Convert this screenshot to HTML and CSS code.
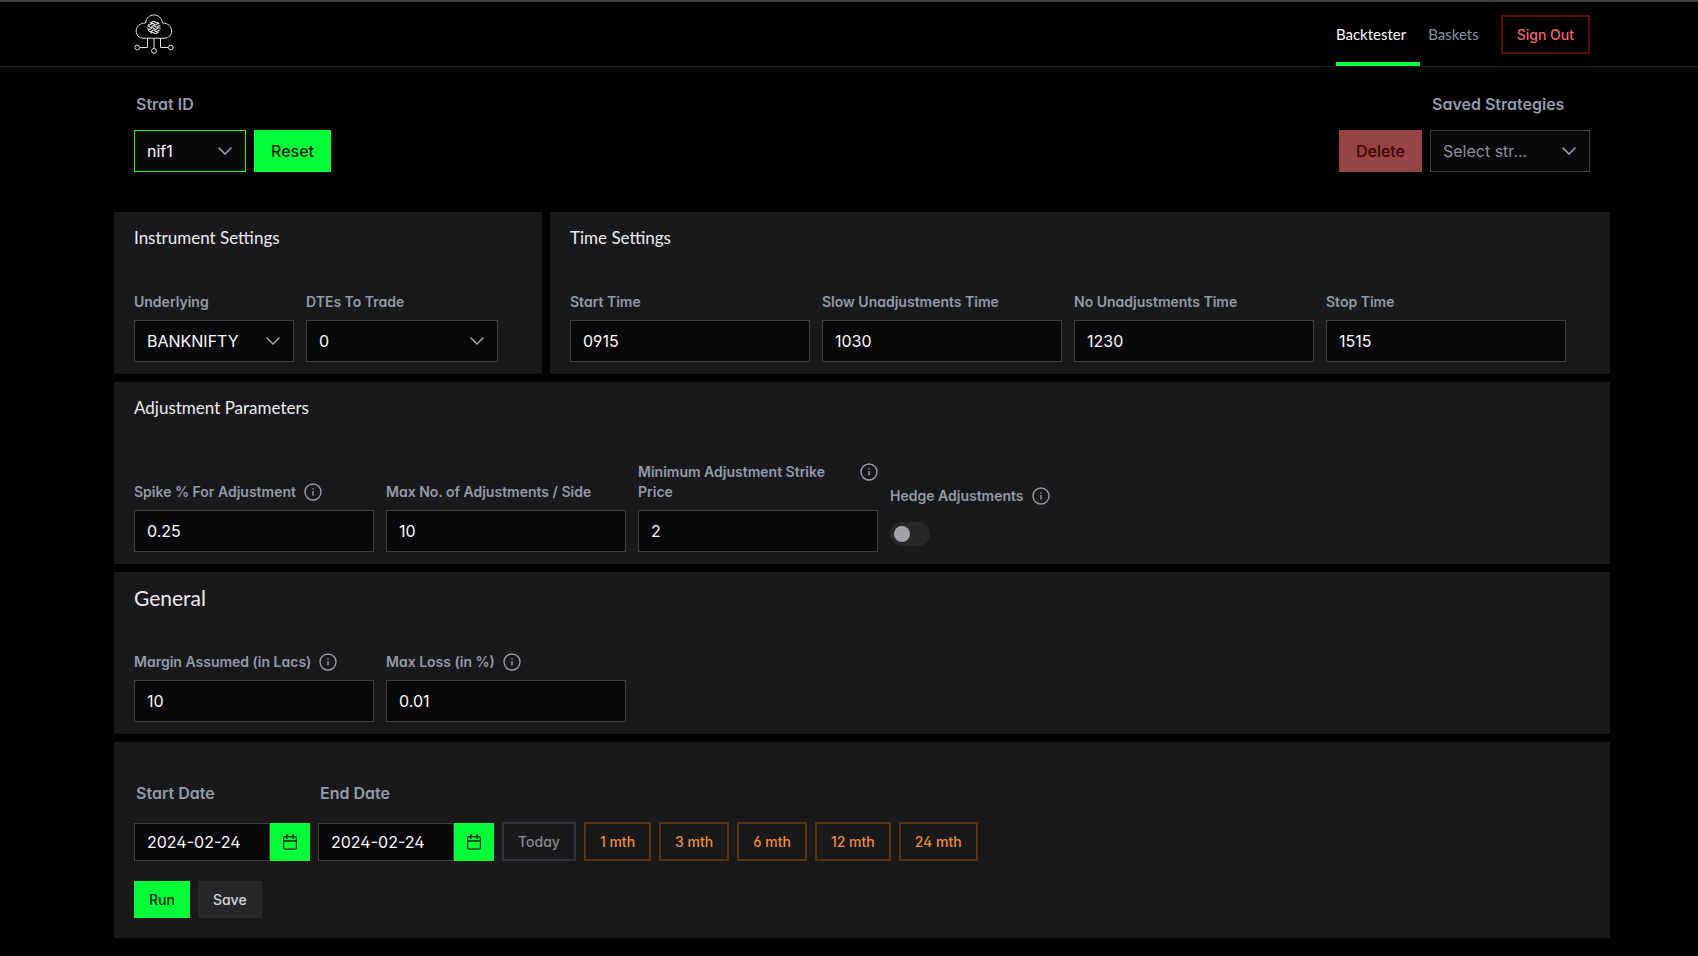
FILE: index.html
```html
<!DOCTYPE html>
<html lang="en">
<head>
<meta charset="utf-8">
<meta name="viewport" content="width=device-width, initial-scale=1">
<title>Backtester</title>
<link rel="stylesheet" href="styles.css">
</head>
<body>
<svg class="defs" aria-hidden="true">
  <symbol id="chevron" viewBox="0 0 14 14"><path d="M1 4l6 6 6-6" fill="none" stroke="currentColor" stroke-width="1.6" stroke-linecap="round" stroke-linejoin="round"/></symbol>
  <symbol id="info" viewBox="0 0 18 18"><circle cx="9" cy="9" r="8" fill="none" stroke="currentColor" stroke-width="1.4"/><path d="M9 8v4.6M9 5.2v1.4" fill="none" stroke="currentColor" stroke-width="1.4"/></symbol>
  <symbol id="calendar" viewBox="0 0 16 16"><rect x="1.6" y="2.6" width="12.8" height="12.6" rx="1.8" fill="none" stroke="currentColor" stroke-width="1.2"/><path d="M1.6 7h12.8M5 .4v4M11 .4v4" fill="none" stroke="currentColor" stroke-width="1.3" stroke-linecap="round"/></symbol>
</svg>

<header class="topbar">
  <a class="logo" href="#" aria-label="Home">
    <svg viewBox="0 0 40 40" fill="none" stroke="#e4e4e7" stroke-width="1">
      <clipPath id="globe"><circle cx="20" cy="13.600" r="6.800"/></clipPath>
      <path d="M9 24.200C5 24 2.200 21.200 2.200 17.200C2.200 12.500 6 9 11.600 9C12.200 3.900 15.600 1 20 1C24.400 1 27.800 3.900 28.400 9C34 9 37.600 12.500 37.600 17C37.600 21.200 34.600 24 30.800 24.200Z"/>
      <path d="M13.500 24.200v9.300H6M26.500 24.200v9.300H34M20 24.200v10"/>
      <circle cx="3.200" cy="33.500" r="2.400"/><circle cx="36.800" cy="33.500" r="2.400"/><circle cx="20" cy="36.900" r="2.400"/>
      <path clip-path="url(#globe)" stroke-width="1.100" d="M12 8q1.500-1.600 3 0t3 0 3 0 3 0 4 0M11 10.200q1.500-1.600 3 0t3 0 3 0 3 0 4 0M12 12.400q1.500-1.600 3 0t3 0 3 0 3 0 4 0M11 14.600q1.500-1.600 3 0t3 0 3 0 3 0 4 0M12 16.800q1.500-1.600 3 0t3 0 3 0 3 0 4 0M11 19q1.500-1.600 3 0t3 0 3 0 3 0 4 0"/>
    </svg>
  </a>
  <nav class="nav">
    <a class="nav-link active" href="#">Backtester</a>
    <a class="nav-link" href="#">Baskets</a>
    <button class="btn btn-outline btn-danger" type="button">Sign Out</button>
  </nav>
</header>

<main class="page">
  <section class="strategy-bar">
    <div class="stack">
      <label class="big-label" for="strat">Strat ID</label>
      <div class="row">
        <span class="select select-strat"><select id="strat"><option>nif1</option></select><svg><use href="#chevron"/></svg></span>
        <button class="btn btn-large btn-green" type="button">Reset</button>
      </div>
    </div>
    <div class="saved">
      <label class="big-label" for="saved">Saved Strategies</label>
      <button class="btn btn-large btn-delete" type="button">Delete</button>
      <span class="select select-md muted"><select id="saved"><option>Select str...</option></select><svg><use href="#chevron"/></svg></span>
    </div>
  </section>

  <div class="panels">
    <section class="panel">
      <h2>Instrument Settings</h2>
      <div class="fields">
        <div class="field"><label for="underlying">Underlying</label>
          <span class="select select-md"><select id="underlying"><option>BANKNIFTY</option></select><svg><use href="#chevron"/></svg></span></div>
        <div class="field"><label for="dte">DTEs To Trade</label>
          <span class="select select-lg"><select id="dte"><option>0</option></select><svg><use href="#chevron"/></svg></span></div>
      </div>
    </section>

    <section class="panel">
      <h2>Time Settings</h2>
      <div class="fields">
        <div class="field"><label for="start">Start Time</label><input class="text" id="start" value="0915"></div>
        <div class="field"><label for="slow">Slow Unadjustments Time</label><input class="text" id="slow" value="1030"></div>
        <div class="field"><label for="none">No Unadjustments Time</label><input class="text" id="none" value="1230"></div>
        <div class="field"><label for="stop">Stop Time</label><input class="text" id="stop" value="1515"></div>
      </div>
    </section>

    <section class="panel wide">
      <h2>Adjustment Parameters</h2>
      <div class="fields">
        <div class="field"><div class="label-row"><label for="spike">Spike % For Adjustment</label><svg class="info"><use href="#info"/></svg></div><input class="text" id="spike" value="0.25"></div>
        <div class="field"><label for="maxadj">Max No. of Adjustments / Side</label><input class="text" id="maxadj" value="10"></div>
        <div class="field"><div class="label-row"><label for="strike">Minimum Adjustment Strike Price</label><svg class="info"><use href="#info"/></svg></div><input class="text" id="strike" value="2"></div>
        <div class="field field-toggle"><div class="label-row"><label for="hedge">Hedge Adjustments</label><svg class="info"><use href="#info"/></svg></div><input class="toggle" id="hedge" type="checkbox" role="switch"></div>
      </div>
    </section>

    <section class="panel wide">
      <h2 class="large">General</h2>
      <div class="fields">
        <div class="field"><div class="label-row"><label for="margin">Margin Assumed (in Lacs)</label><svg class="info"><use href="#info"/></svg></div><input class="text" id="margin" value="10"></div>
        <div class="field"><div class="label-row"><label for="loss">Max Loss (in %)</label><svg class="info"><use href="#info"/></svg></div><input class="text" id="loss" value="0.01"></div>
      </div>
    </section>

    <section class="panel wide run-panel">
      <div class="row dates">
        <div class="stack">
          <label class="big-label" for="from">Start Date</label>
          <div class="date"><input class="text" id="from" value="2024-02-24"><button type="button" aria-label="Choose start date"><svg><use href="#calendar"/></svg></button></div>
        </div>
        <div class="stack">
          <label class="big-label" for="to">End Date</label>
          <div class="date"><input class="text" id="to" value="2024-02-24"><button type="button" aria-label="Choose end date"><svg><use href="#calendar"/></svg></button></div>
        </div>
        <button class="btn btn-outline btn-today" type="button">Today</button>
        <button class="btn btn-outline btn-month" type="button">1 mth</button>
        <button class="btn btn-outline btn-month" type="button">3 mth</button>
        <button class="btn btn-outline btn-month" type="button">6 mth</button>
        <button class="btn btn-outline btn-month" type="button">12 mth</button>
        <button class="btn btn-outline btn-month" type="button">24 mth</button>
      </div>
      <div class="row">
        <button class="btn btn-green" type="button">Run</button>
        <button class="btn btn-grey" type="button">Save</button>
      </div>
    </section>
  </div>
</main>
</body>
</html>
```
FILE: styles.css
```css
* { box-sizing: border-box; }

body {
  margin: 0;
  min-height: 100vh;
  border-top: 2px solid #424242;
  background: #000;
  color: #fafafa;
  font-family: Inter, "Liberation Sans", sans-serif;
  font-feature-settings: "cv02", "cv03", "cv04", "cv11";
}

button, input, select {
  margin: 0;
  border-radius: 0;
  font: inherit;
  font-feature-settings: inherit;
  color: inherit;
}

.defs { display: none; }

/* Top bar */
.topbar {
  display: flex;
  justify-content: space-between;
  align-items: center;
  height: 65px;
  padding: 0 108px 0 134px;
  border-bottom: 1px solid #1d1d1f;
}
.logo svg { display: block; width: 40px; height: 40px; }
.nav { display: flex; align-items: center; align-self: stretch; }
.nav-link {
  display: flex;
  align-items: center;
  align-self: stretch;
  margin-right: 8px;
  border: solid transparent;
  border-width: 4px 0;
  padding-right: 14px;
  color: #8b93a3;
  font-family: "Futura PT", Futura, Lato, sans-serif;
  font-size: 15px;
  text-decoration: none;
}
.nav-link.active { color: #fafafa; border-bottom-color: #00ff38; }

/* Buttons */
.btn {
  border: 0;
  padding: 10px 15px;
  font-size: 14px;
  line-height: 17px;
  font-weight: 500;
}
.btn-large { padding: 0 17px; height: 42px; font-size: 16px; }
.btn-green { background: #00ff38; color: #052310; }
.btn-grey { background: #27272a; color: #d4d4d8; }
.btn-delete { background: #954344; color: #3a0708; }
.btn-outline { border: 2px solid; padding: 9px 14px; background: transparent; }
.btn-danger { border-color: #5a0d10; color: #f26669; }
.btn-today { border-color: #323238; color: #8a8a92; }
.btn-month { border-color: #573510; color: #ee8d3e; }

/* Form controls */
.text, .select select {
  width: 100%;
  height: 42px;
  border: 1px solid #3f3f43;
  padding: 0 12px;
  background: #09090b;
  font-size: 16px;
}
.select { position: relative; display: block; }
.select select { appearance: none; }
.select svg {
  position: absolute;
  top: 14px;
  right: 14px;
  width: 14px;
  height: 14px;
  color: #a1a1aa;
  pointer-events: none;
}
.select-strat { width: 112px; }
.select-strat select { border-color: #00ff38; }
.select-md { width: 160px; }
.select-lg { width: 192px; }
.muted { color: #8f8f97; }

.toggle {
  position: relative;
  appearance: none;
  width: 40px;
  height: 24px;
  border-radius: 12px;
  background: #27272a;
}
.toggle::before {
  content: "";
  position: absolute;
  top: 4px;
  left: 4px;
  width: 16px;
  height: 16px;
  border-radius: 50%;
  background: #a1a1aa;
}

/* Page */
.page { padding: 25px 88px 16px 114px; }
.row { display: flex; gap: 8px; }
.stack { display: grid; gap: 14px; }
.big-label {
  padding-left: 2px;
  color: #949ba8;
  font-size: 16px;
  line-height: 24px;
  font-weight: 600;
}
.strategy-bar {
  display: flex;
  justify-content: space-between;
  padding: 0 20px;
  margin-bottom: 40px;
}
.saved { display: grid; grid-template-columns: auto auto; gap: 14px 8px; }
.saved .big-label { grid-column: 2; }

.panels { display: grid; grid-template-columns: 428px minmax(0, 1fr); gap: 8px; }
.panel { padding: 12px 20px; background: #19191b; }
.wide { grid-column: 1 / -1; }
.panel h2 {
  margin: 0 0 40px;
  color: #ececee;
  font-family: "Futura PT", Futura, Lato, sans-serif;
  font-size: 17px;
  line-height: 28px;
  font-weight: 400;
}
.panel h2.large { font-size: 21px; }
.fields { display: flex; flex-wrap: wrap; align-items: flex-end; gap: 12px; }
.field { display: grid; gap: 8px; color: #949ba8; font-size: 14px; line-height: 20px; font-weight: 600; }
.field .text { width: 240px; }
.field .text, .field .select { color: #fafafa; font-weight: 400; }
.label-row { display: flex; gap: 8px; max-width: 240px; }
.info { flex: none; width: 18px; height: 18px; margin-top: 1px; }
.field-toggle { gap: 16px; padding-bottom: 6px; }

.run-panel { padding: 39px 20px 20px; }
.dates { align-items: flex-end; margin-bottom: 20px; }
.date { display: flex; width: 176px; }
.date .text { height: 38px; }
.date button {
  display: grid;
  place-items: center;
  flex: none;
  width: 40px;
  border: 0;
  background: #00ff38;
  color: #052310;
}
.date svg { width: 16px; height: 16px; }
.dates .stack { gap: 18px; }
```
